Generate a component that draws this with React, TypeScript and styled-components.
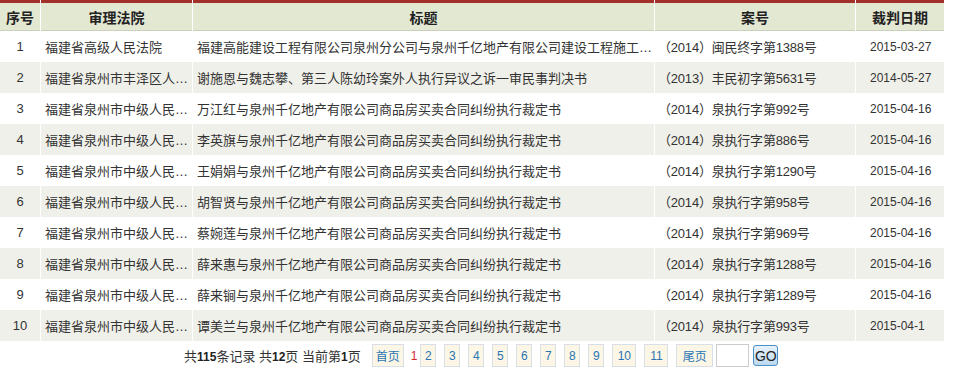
import React from "react";
import styled, { createGlobalStyle } from "styled-components";

const Global = createGlobalStyle`
  html, body { margin: 0; padding: 0; background: #fff; }
  body { font-family: "Liberation Sans", "Noto Sans CJK SC", sans-serif; font-size: 12px; color: #333; }
`;

const Wrap = styled.div`
  width: 946px;
`;

const Table = styled.table`
  width: 946px;
  table-layout: fixed;
  border-collapse: separate;
  border-spacing: 1px 0;
  margin-left: -1px;
`;

const Th = styled.th`
  height: 27px;
  padding: 0;
  background: #e3e8d3;
  border-top: 3px solid #a3302a;
  border-bottom: 1px solid #cbd0bc;
  font-size: 14px;
  font-weight: bold;
  color: #222;
  text-align: center;
`;

const Tr = styled.tr<{ $alt: boolean }>`
  background: ${(p) => (p.$alt ? "#f0f0ea" : "#fff")};
`;

const Td = styled.td<{ $align?: string }>`
  height: 31px;
  padding: 0 0 0 4px;
  text-align: ${(p) => p.$align || "left"};
  white-space: nowrap;
  overflow: hidden;
  text-overflow: ellipsis;
  font-size: 13px;
  color: #333;
`;

const CaseTd = styled(Td)`
  padding-left: 3px;
  letter-spacing: -0.2px;
`;

const NumTd = styled(Td)`
  font-size: 13px;
  padding: 0;
`;

const DateTd = styled(Td)`
  font-size: 12px;
  padding: 0 0 0 14px;
`;

const Pager = styled.div`
  display: flex;
  align-items: center;
  height: 29px;
  padding-left: 184px;
  font-size: 12px;
  color: #333;
`;

const Info = styled.span`
  font-size: 13px;
  margin-right: 11px;
  b { font-weight: bold; color: #222; font-size: 12px; }
`;

const PageBtn = styled.span<{ $w: number }>`
  display: inline-flex;
  align-items: center;
  justify-content: center;
  box-sizing: border-box;
  height: 23px;
  width: ${(p) => p.$w}px;
  border: 1px solid #d8dfe6;
  background: #fbf6e6;
  color: #2a75b2;
  font-size: 12px;
  margin-right: 8px;
`;

const Current = styled.span`
  color: #d8262e;
  font-size: 12px;
  margin: 0 3px 0 -1px;
`;

const Input = styled.span`
  display: inline-block;
  box-sizing: border-box;
  width: 33px;
  height: 23px;
  border: 1px solid #ccc;
  background: #fff;
  margin-left: -5px;
  margin-right: 4px;
`;

const Go = styled.span`
  display: inline-flex;
  align-items: center;
  justify-content: center;
  box-sizing: border-box;
  width: 25px;
  height: 21px;
  border: 1px solid #4a90c8;
  border-radius: 3px;
  background: linear-gradient(#e8f2fb, #bcd9f0);
  color: #222;
  font-size: 14px;
`;

const rows = [
  ["1", "福建省高级人民法院", "福建高能建设工程有限公司泉州分公司与泉州千亿地产有限公司建设工程施工合同纠纷二审民事判决书", "（2014）闽民终字第1388号", "2015-03-27"],
  ["2", "福建省泉州市丰泽区人民法院", "谢施恩与魏志攀、第三人陈幼玲案外人执行异议之诉一审民事判决书", "（2013）丰民初字第5631号", "2014-05-27"],
  ["3", "福建省泉州市中级人民法院", "万江红与泉州千亿地产有限公司商品房买卖合同纠纷执行裁定书", "（2014）泉执行字第992号", "2015-04-16"],
  ["4", "福建省泉州市中级人民法院", "李英旗与泉州千亿地产有限公司商品房买卖合同纠纷执行裁定书", "（2014）泉执行字第886号", "2015-04-16"],
  ["5", "福建省泉州市中级人民法院", "王娟娟与泉州千亿地产有限公司商品房买卖合同纠纷执行裁定书", "（2014）泉执行字第1290号", "2015-04-16"],
  ["6", "福建省泉州市中级人民法院", "胡智贤与泉州千亿地产有限公司商品房买卖合同纠纷执行裁定书", "（2014）泉执行字第958号", "2015-04-16"],
  ["7", "福建省泉州市中级人民法院", "蔡婉莲与泉州千亿地产有限公司商品房买卖合同纠纷执行裁定书", "（2014）泉执行字第969号", "2015-04-16"],
  ["8", "福建省泉州市中级人民法院", "薛来惠与泉州千亿地产有限公司商品房买卖合同纠纷执行裁定书", "（2014）泉执行字第1288号", "2015-04-16"],
  ["9", "福建省泉州市中级人民法院", "薛来锏与泉州千亿地产有限公司商品房买卖合同纠纷执行裁定书", "（2014）泉执行字第1289号", "2015-04-16"],
  ["10", "福建省泉州市中级人民法院", "谭美兰与泉州千亿地产有限公司商品房买卖合同纠纷执行裁定书", "（2014）泉执行字第993号", "2015-04-1"],
];

const pages = ["2", "3", "4", "5", "6", "7", "8", "9", "10", "11"];

export default function App() {
  return (
    <Wrap>
      <Global />
      <Table>
        <colgroup>
          <col style={{ width: 40 }} />
          <col style={{ width: 151 }} />
          <col style={{ width: 461 }} />
          <col style={{ width: 200 }} />
          <col style={{ width: 88 }} />
        </colgroup>
        <thead>
          <tr>
            <Th>序号</Th>
            <Th>审理法院</Th>
            <Th>标题</Th>
            <Th>案号</Th>
            <Th>裁判日期</Th>
          </tr>
        </thead>
        <tbody>
          {rows.map((r, i) => (
            <Tr key={i} $alt={i % 2 === 1}>
              <NumTd $align="center">{r[0]}</NumTd>
              <Td>{r[1]}</Td>
              <Td>{r[2]}</Td>
              <CaseTd>{r[3]}</CaseTd>
              <DateTd>{r[4]}</DateTd>
            </Tr>
          ))}
        </tbody>
      </Table>
      <Pager>
        <Info>
          共<b>115</b>条记录 共<b>12</b>页 当前第<b>1</b>页
        </Info>
        <PageBtn $w={32}>首页</PageBtn>
        <Current>1</Current>
        {pages.map((n) => (
          <PageBtn key={n} $w={n.length > 1 ? 24 : 16}>{n}</PageBtn>
        ))}
        <PageBtn $w={37}>尾页</PageBtn>
        <Input />
        <Go>GO</Go>
      </Pager>
    </Wrap>
  );
}
